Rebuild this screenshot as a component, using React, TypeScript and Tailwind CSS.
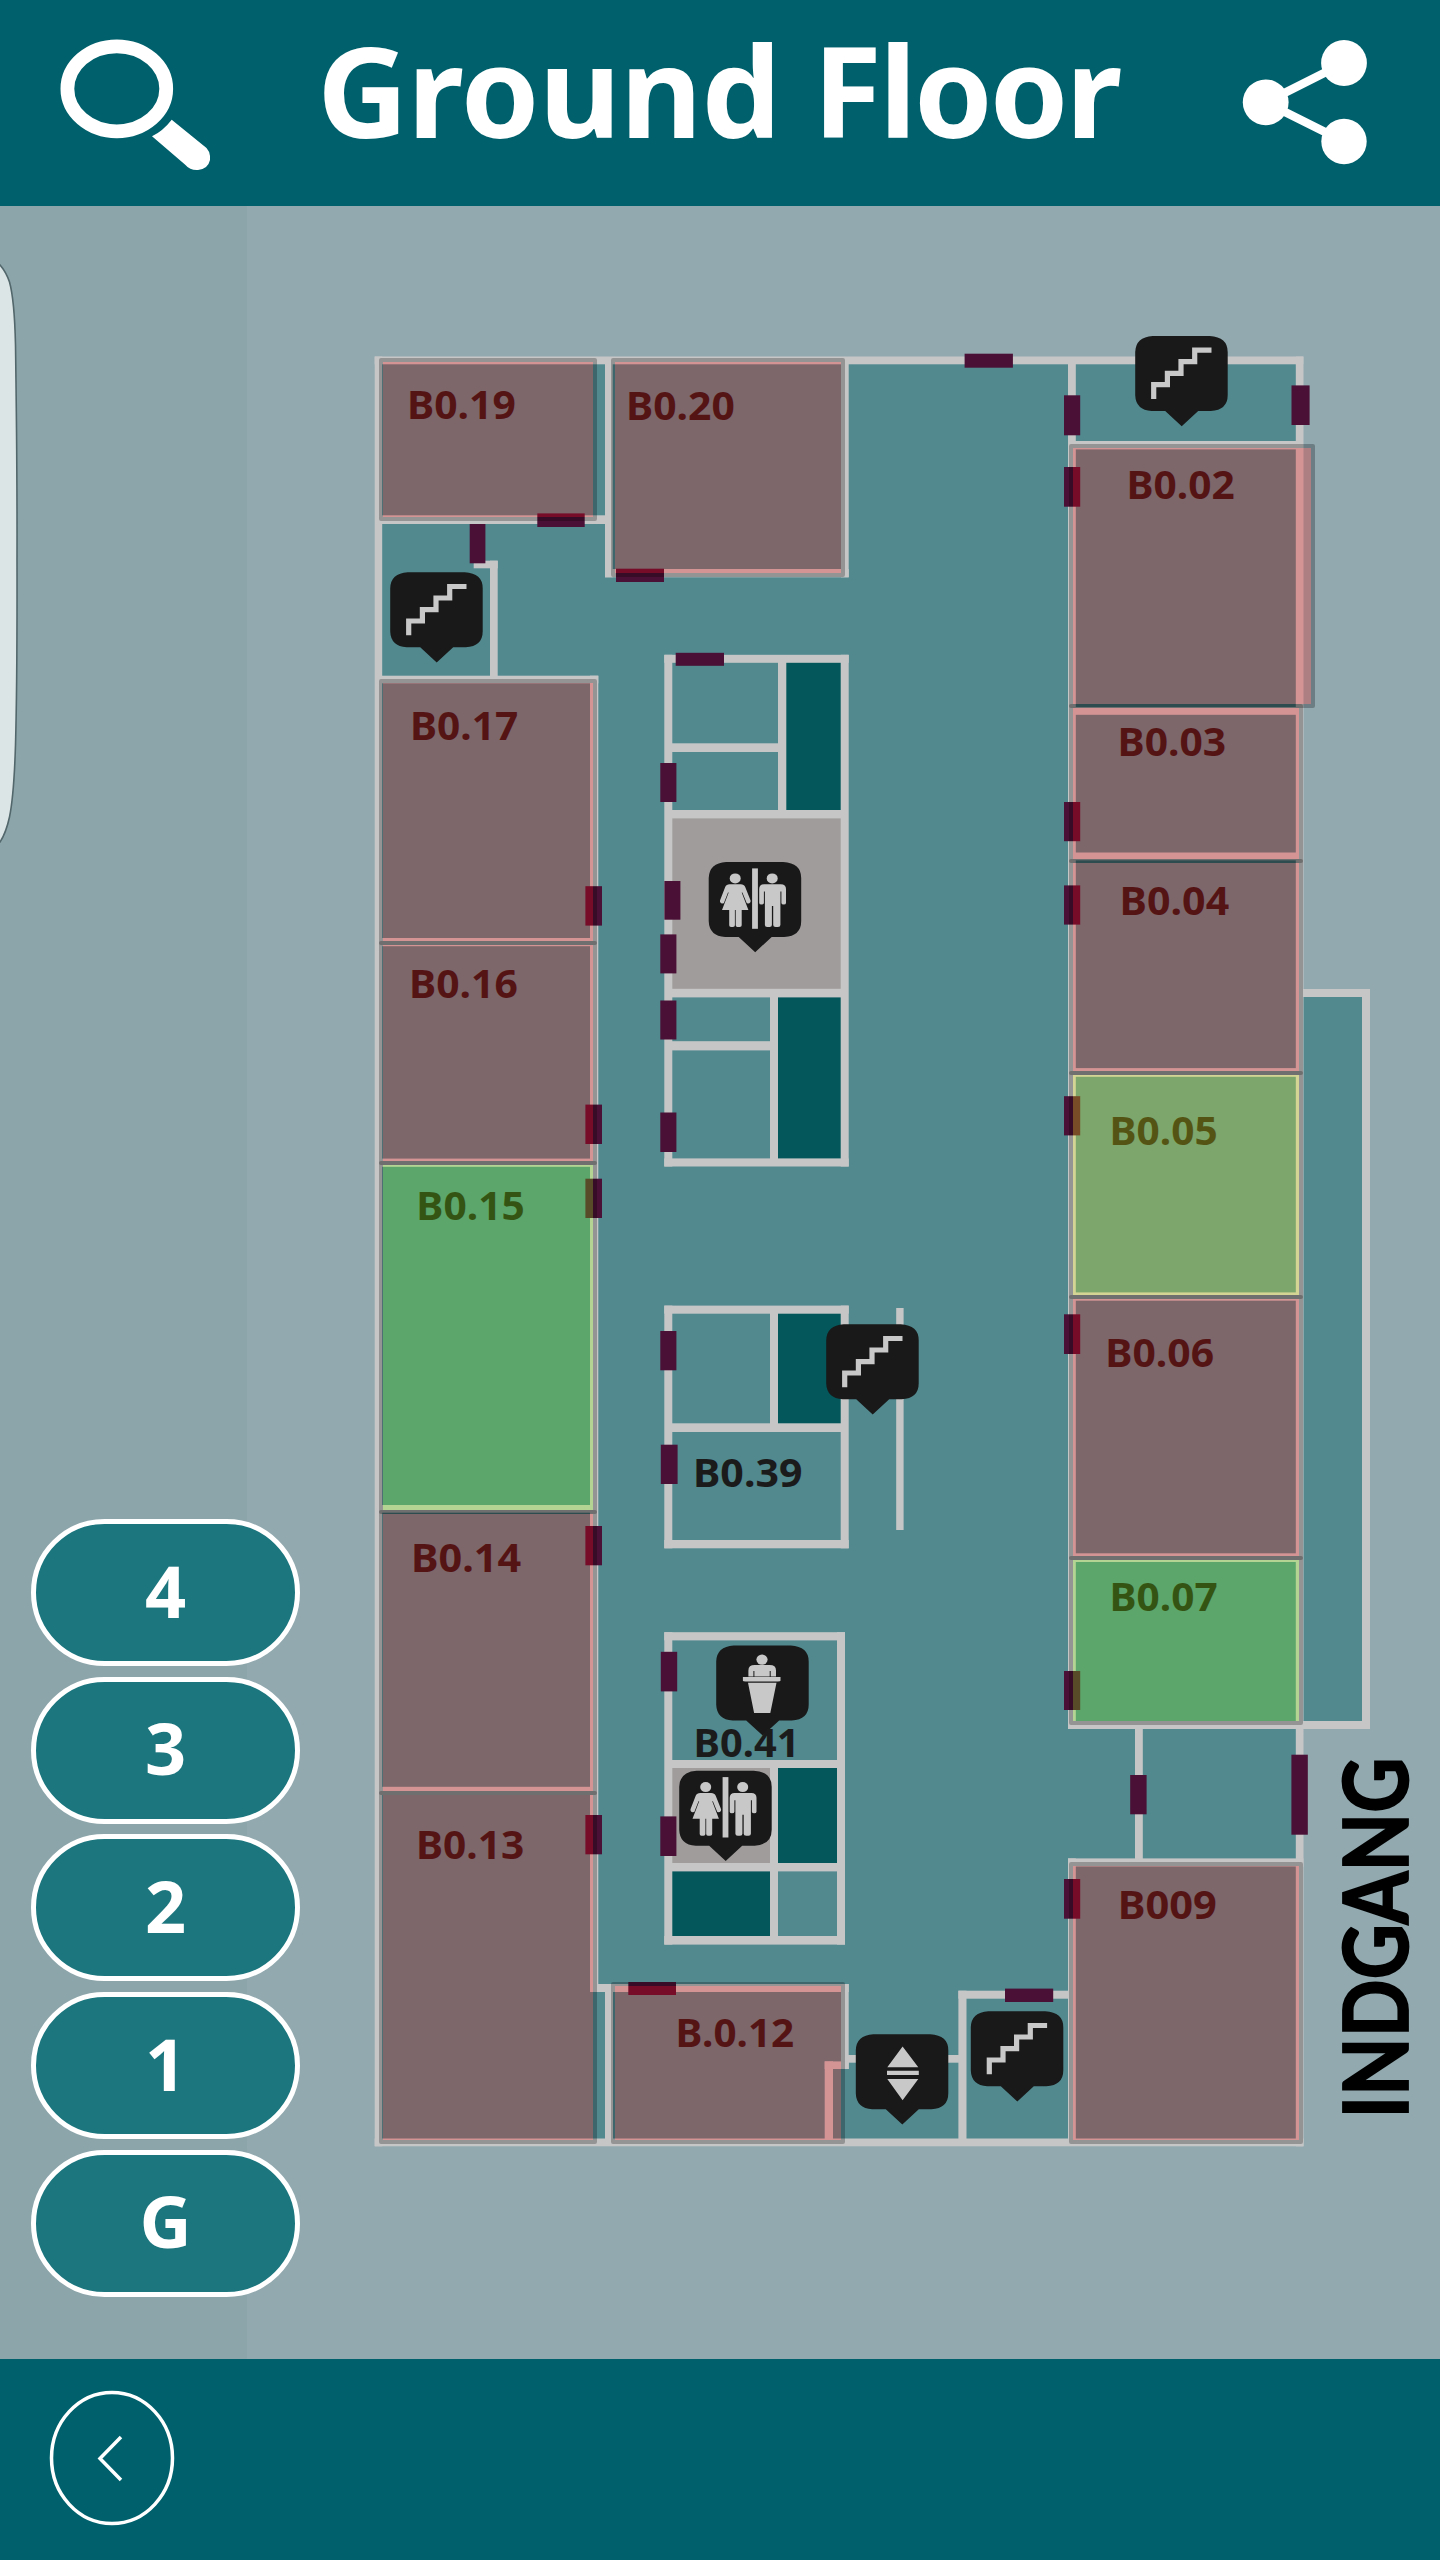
type Box = [x1: number, y1: number, x2: number, y2: number];

const FLOORS = ['4', '3', '2', '1', 'G'];

const FLOOR_AREAS: Box[] = [
  [375, 357, 1303, 2146],
  [1303, 990, 1368, 1728],
];

const SHAFTS: Box[] = [
  [785, 662, 842, 811],
  [777, 996, 842, 1159],
  [777, 1312, 842, 1425],
  [777, 1766, 838, 1865],
  [671, 1870, 771, 1938],
];

const RESTROOMS: Box[] = [
  [671, 817, 842, 990],
  [671, 1766, 771, 1865],
];

const WALLS: Box[] = [
  // outer shell
  [374.7, 356.5, 382.2, 2146.3],
  [374.7, 356.5, 1303.3, 364.3],
  [374.7, 2138.5, 1303.6, 2146.3],
  // west wing
  [382, 515.3, 606, 524],
  [605, 357, 612.7, 577.3],
  [605, 569, 848.7, 577.3],
  [841, 357, 848.7, 577.3],
  [473.7, 560.7, 497.7, 568.3],
  [490, 560.7, 497.7, 677],
  [375, 675.7, 598.3, 683.3],
  [590, 675.7, 598.3, 1991.8],
  [375, 938, 598, 946.2],
  [375, 1158.6, 598, 1166.8],
  [375, 1505, 598, 1512.7],
  [375, 1786.8, 598, 1795],
  [590, 1984, 848.7, 1992],
  [605, 1984, 613, 2146],
  [841, 1984, 848.7, 2069],
  [824.7, 2061.4, 848.7, 2069],
  [824.7, 2061.4, 833, 2140],
  [848, 2055, 960, 2062.7],
  [958.4, 1990.7, 1069, 1998.7],
  [958.4, 1990.7, 966.5, 2140],
  // core 1
  [664.3, 654.8, 672.3, 1166.5],
  [840.7, 654.8, 848.7, 1166.5],
  [664.3, 654.8, 848.7, 662.8],
  [664.3, 1158.4, 848.7, 1166.5],
  [778, 655, 786.3, 818],
  [672, 743.3, 779, 752],
  [672, 810, 842, 818.4],
  [672, 988.8, 842, 997.4],
  [770, 997, 778, 1160],
  [672, 1041.2, 771, 1050.4],
  // core 2
  [664.3, 1305.6, 672.3, 1548.3],
  [840.7, 1305.6, 848.7, 1548.3],
  [664.3, 1305.6, 848.7, 1313.7],
  [664.3, 1540, 848.7, 1548.3],
  [770, 1306, 778, 1430],
  [672, 1423.3, 842, 1432],
  [896.2, 1308, 903.6, 1530],
  // core 3
  [664.3, 1632.2, 672.3, 1944.6],
  [837, 1632.2, 845, 1944.6],
  [664.3, 1632.2, 845, 1640.4],
  [664.3, 1936, 845, 1944.6],
  [672, 1760, 838, 1768],
  [672, 1863, 838, 1871.4],
  [770, 1760, 778, 1940],
  // east wing
  [1068, 357, 1075.8, 1729],
  [1295.8, 356.5, 1303.5, 2146.3],
  [1068, 441, 1303, 449.4],
  [1068, 707, 1303, 714.8],
  [1068, 852.5, 1303, 860.3],
  [1068, 1068.1, 1303, 1076.8],
  [1068, 1292.4, 1303, 1300.7],
  [1068, 1553.3, 1303, 1562],
  [1303, 989, 1370, 997],
  [1362, 989, 1370, 1729],
  [1068, 1721, 1370, 1729],
  [1135, 1729, 1142.8, 1860],
  [1068, 1858.4, 1303.5, 1866.5],
  [1068, 1858.4, 1075.8, 2146],
];

const DOORS: Box[] = [
  [537.3, 513.4, 584.7, 527],
  [469.7, 524, 485.4, 563.3],
  [616, 568.7, 664, 582],
  [585.4, 886.2, 602, 925.6],
  [585.4, 1104.6, 602, 1144],
  [585.4, 1178.7, 602, 1218],
  [585.4, 1526, 602, 1565.3],
  [585.4, 1815, 602, 1854.3],
  [628.3, 1982, 676, 1995],
  [675.7, 652.8, 724, 665.8],
  [660.3, 763, 676.4, 802],
  [664.4, 881, 680.4, 919.7],
  [660.3, 934.4, 676.4, 973.4],
  [660.3, 1000.5, 676.4, 1039.5],
  [660.3, 1112.5, 676.4, 1152],
  [660.3, 1331, 676.4, 1370.3],
  [660.8, 1444.7, 677.6, 1484],
  [660.8, 1651.8, 677.2, 1691.4],
  [660.3, 1816.4, 676.4, 1856],
  [964.6, 353.7, 1012.9, 367.7],
  [1064, 395.3, 1080.2, 435.3],
  [1064, 467, 1080.2, 506.7],
  [1291.5, 385.4, 1309.6, 425],
  [1064, 802, 1080.2, 841.2],
  [1064, 885.4, 1080.2, 924.6],
  [1064, 1096.2, 1080.2, 1135.4],
  [1064, 1314.3, 1080.2, 1354],
  [1064, 1671, 1080.2, 1710],
  [1064, 1879, 1080.2, 1918.7],
  [1130.2, 1775, 1146.6, 1814.3],
  [1291.4, 1754.7, 1307.8, 1834.7],
  [1005, 1988.6, 1053.2, 2002],
];

type Status = 'busy' | 'free' | 'soon';

const STATUS_FILL: Record<Status, string> = {
  busy: 'fill-[#ff0000]/25',
  free: 'fill-[#80ff00]/25',
  soon: 'fill-[#ffff00]/25',
};

const ROOMS: { box: Box; status: Status }[] = [
  { box: [379, 358, 597, 521], status: 'busy' },
  { box: [611, 358, 845, 577], status: 'busy' },
  { box: [379, 679, 597, 945], status: 'busy' },
  { box: [379, 941, 597, 1165], status: 'busy' },
  { box: [379, 1161, 597, 1514], status: 'free' },
  { box: [379, 1510, 597, 1795], status: 'busy' },
  { box: [379, 1791, 597, 2144], status: 'busy' },
  { box: [611, 1982, 845, 2144], status: 'busy' },
  { box: [1069, 444, 1315, 708], status: 'busy' },
  { box: [1069, 704, 1303, 863], status: 'busy' },
  { box: [1069, 859, 1303, 1075], status: 'busy' },
  { box: [1069, 1071, 1303, 1299], status: 'soon' },
  { box: [1069, 1295, 1303, 1560], status: 'busy' },
  { box: [1069, 1556, 1303, 1725], status: 'free' },
  { box: [1069, 1862, 1303, 2144], status: 'busy' },
];

const LABELS: { text: string; x: number; y: number; w: number }[] = [
  { text: 'B0.19', x: 409.7, y: 419, w: 104.6 },
  { text: 'B0.20', x: 628.7, y: 420.3, w: 104.6 },
  { text: 'B0.17', x: 412.7, y: 740, w: 104 },
  { text: 'B0.16', x: 411.7, y: 998, w: 104.6 },
  { text: 'B0.15', x: 419, y: 1220.3, w: 104.3 },
  { text: 'B0.14', x: 413.7, y: 1571.5, w: 106 },
  { text: 'B0.13', x: 418.7, y: 1859.2, w: 104 },
  { text: 'B.0.12', x: 678.3, y: 2046.7, w: 114.4 },
  { text: 'B0.39', x: 695.7, y: 1486.5, w: 105.3 },
  { text: 'B0.02', x: 1129.3, y: 498.5, w: 104 },
  { text: 'B0.03', x: 1120.3, y: 756, w: 104.4 },
  { text: 'B0.04', x: 1122.3, y: 914.7, w: 105.4 },
  { text: 'B0.05', x: 1112.3, y: 1145, w: 104 },
  { text: 'B0.06', x: 1108, y: 1367.3, w: 104.6 },
  { text: 'B0.07', x: 1112.3, y: 1611.3, w: 104 },
  { text: 'B009', x: 1120.4, y: 1918.8, w: 95 },
];

type Kind = 'stairs' | 'restroom' | 'lift' | 'speaker';

const PINS: { kind: Kind; x: number; y: number }[] = [
  { kind: 'stairs', x: 389.7, y: 572.3 },
  { kind: 'stairs', x: 1134.7, y: 336 },
  { kind: 'stairs', x: 825.7, y: 1324.3 },
  { kind: 'stairs', x: 970.3, y: 2011.3 },
  { kind: 'lift', x: 855.3, y: 2034.3 },
  { kind: 'restroom', x: 708.2, y: 862 },
  { kind: 'restroom', x: 678.7, y: 1770.7 },
  { kind: 'speaker', x: 715.7, y: 1645.4 },
];

function Boxes({ items, className }: { items: Box[]; className: string }) {
  return (
    <g className={className}>
      {items.map(([x1, y1, x2, y2], i) => (
        <rect key={i} x={x1} y={y1} width={x2 - x1} height={y2 - y1} />
      ))}
    </g>
  );
}

function Glyph({ kind }: { kind: Kind }) {
  if (kind === 'stairs') {
    return (
      <path
        className="fill-none stroke-[#c8c8c8]"
        strokeWidth="5.2"
        d="M19 63V48.7H32.7V37.3H46.3V25.7H60V14.2H76.8"
      />
    );
  }
  if (kind === 'lift') {
    return <path className="fill-[#c8c8c8]" d="M47.3 12.2 63 33H32ZM31.7 36.5H63.5V40.6H31.7ZM32 44.7H63L47.3 66Z" />;
  }
  if (kind === 'speaker') {
    return (
      <g className="fill-[#c8c8c8]">
        <ellipse cx="46.3" cy="14.2" rx="5.6" ry="5.2" />
        <path d="M32.7 31V25Q32.7 19.6 39 19.6H54Q60.3 19.6 60.3 25V31H55V25.5H54V31H38.7V25.5H37.7V31ZM27.2 31.6H64.8V35.4Q64.8 36 62 36H30Q27.2 36 27.2 35.4ZM32.3 37.4H60.8L54.6 67.5H38.4Z" />
      </g>
    );
  }
  return (
    <g className="fill-[#c8c8c8]">
      <rect x="43.9" y="6.4" width="5.8" height="60.4" />
      <ellipse cx="27" cy="16.4" rx="5.5" ry="5" />
      <ellipse cx="64" cy="16.4" rx="5.5" ry="5" />
      <path d="M21.5 22.2H32.5Q35.8 22.2 37 25L42.4 38.5Q42.7 41 40 41.5L38.6 41.2 34.2 30.5H33.5L40.2 48H33.5V63.2Q33.5 65 31.5 65H29.2Q27.6 65 27.5 63.2V48H26.7V63.2Q26.7 65 24.8 65H22.8Q21 65 21 63.2V48H13.8L20.5 30.5H19.8L15.6 41.2 14 41.5Q11.5 41 11.8 38.5L17 25Q18.2 22.2 21.5 22.2Z" />
      <path d="M56 22.2H72.5Q77.8 22.2 77.8 27V41Q77.8 42.6 75.5 42.6 73.2 42.6 73.2 41V29.5H72.2V63Q72.2 65 69.8 65H67.4Q65 65 65 63V44H63.7V63Q63.7 65 61.4 65H59Q56.7 65 56.7 63V29.5H55.7V41Q55.7 42.6 53.3 42.6 51 42.6 51 41V27Q51 22.2 56 22.2Z" />
    </g>
  );
}

function Pin({ kind, x, y }: { kind: Kind; x: number; y: number }) {
  return (
    <g transform={`translate(${x} ${y})`}>
      <path
        className="fill-[#191919]"
        d="M18 0H75Q93 1 93 16V59Q93 74 76 75H63.5L47 90.2 30.5 75H17Q1 74 .5 59V16Q1 1 18 0Z"
      />
      <Glyph kind={kind} />
    </g>
  );
}

function FloorPlan() {
  return (
    <svg className="block h-full w-full" viewBox="0 206 1440 2153">
      <rect x="0" y="206" width="247" height="2153" className="fill-[#8ca5aa]" />
      <path
        className="fill-[#dce5e5] stroke-[#52676b]"
        strokeWidth="1.6"
        d="M-8 258Q4 266 9.500 282Q14.500 300 15.500 345Q17.300 470 17 560Q17.300 680 15.500 745Q14 795 9.500 817Q6 833 0 842L-8 852Z"
      />

      <Boxes items={FLOOR_AREAS} className="fill-[#51898f]" />
      <Boxes items={SHAFTS} className="fill-[#04585c]" />
      <Boxes items={RESTROOMS} className="fill-[#a19c9c]" />
      <Boxes items={WALLS} className="fill-[#c6c6c6]" />
      <Boxes items={DOORS} className="fill-[#4a1035]" />

      {PINS.map((pin, i) => (
        <Pin key={i} {...pin} />
      ))}

      <g className="fill-[#1b1b1b] font-['Noto_Sans'] text-[38.500px] font-bold">
        {LABELS.map(({ text, x, y, w }) => (
          <text key={text} x={x - 2.7} y={y + 0.1} textLength={w + 4.2} lengthAdjust="spacingAndGlyphs">
            {text}
          </text>
        ))}
        <text x={693.6} y={1757} textLength={106} lengthAdjust="spacingAndGlyphs">
          B0.41
        </text>
      </g>

      <text
        className="fill-black stroke-black font-['Lato'] text-[90px] font-bold"
        strokeWidth="1.8"
        transform="translate(1408.300 2118.500) rotate(-90)"
        textLength={361}
        lengthAdjust="spacingAndGlyphs"
      >
        INDGANG
      </text>

      {ROOMS.map(({ box: [x1, y1, x2, y2], status }, i) => (
        <g key={i}>
          <rect
            x={x1 + 4}
            y={y1 + 4}
            width={x2 - x1 - 8}
            height={y2 - y1 - 8}
            className={STATUS_FILL[status]}
          />
          <rect
            x={x1 + 2}
            y={y1 + 2}
            width={x2 - x1 - 4}
            height={y2 - y1 - 4}
            strokeWidth="4"
            strokeLinejoin="round"
            className="fill-none stroke-black/25"
          />
        </g>
      ))}
    </svg>
  );
}

export default function App() {
  return (
    <div className="flex h-[2560px] w-[1440px] flex-col overflow-hidden bg-[#91a9af] font-['Noto_Sans',sans-serif] text-white">
      <header className="flex h-[206px] shrink-0 items-start bg-[#00616c] pl-[59px]">
        <button aria-label="Search" className="mt-[39px]">
          <svg className="block h-[133px] w-[152px]" viewBox="59 39 152 133">
            <ellipse cx="116.800" cy="88.800" rx="49.400" ry="42.500" className="fill-none stroke-white" strokeWidth="13.800" />
            <path
              className="fill-white"
              d="M171.700 119.700 206.500 148Q210 152 210 156V160Q208 169 198 170Q190 170.500 185.500 165L152 136.200Q163 131 171.700 119.700Z"
            />
          </svg>
        </button>
        <h1 className="mt-[3px] ml-[106px] w-[925px] text-[126px] leading-[172px] font-bold whitespace-nowrap">
          <span className="tracking-[-0.600px]">Ground </span>
          <span className="tracking-[-2.800px]">Floor</span>
        </h1>
        <button aria-label="Share" className="mt-[39px]">
          <svg className="block h-[126px] w-[126px]" viewBox="1242 39 126 126">
            <path d="M1344 63 1265.700 102.300 1344 141.500" className="fill-none stroke-white" strokeWidth="8.500" />
            <circle cx="1344" cy="63" r="22.900" className="fill-white" />
            <circle cx="1265.700" cy="102.300" r="22.900" className="fill-white" />
            <circle cx="1344" cy="141.500" r="22.700" className="fill-white" />
          </svg>
        </button>
      </header>

      <main className="relative h-[2153px] shrink-0">
        <FloorPlan />
        <nav className="absolute top-[1313px] left-[31px] flex w-[269px] flex-col gap-[10.700px]">
          {FLOORS.map((floor) => (
            <button
              key={floor}
              className="flex h-[147px] items-center justify-center rounded-full border-[5px] border-white bg-[#1c767e] pb-1.5 text-[72px] leading-none font-bold"
            >
              {floor}
            </button>
          ))}
        </nav>
      </main>

      <footer className="flex h-[201px] shrink-0 items-start bg-[#00616c] pt-[31px] pl-[49px]">
        <button aria-label="Back">
          <svg className="block h-[136px] w-[126px]" viewBox="49 2390 126 136">
            <ellipse cx="112" cy="2458" rx="60.500" ry="65.500" className="fill-none stroke-white" strokeWidth="3.500" />
            <path d="M121 2437 100 2458.500 121 2480" className="fill-none stroke-white" strokeWidth="3.500" />
          </svg>
        </button>
      </footer>
    </div>
  );
}
